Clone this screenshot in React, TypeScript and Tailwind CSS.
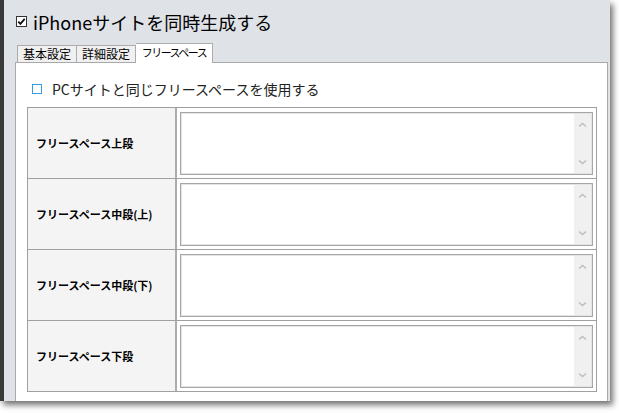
import React from 'react';

const font = { fontFamily: '"Noto Sans CJK JP", "Noto Sans", sans-serif' };

const rows = ['フリースペース上段', 'フリースペース中段(上)', 'フリースペース中段(下)', 'フリースペース下段'];

const Chevron = ({ down }: { down?: boolean }) => (
  <svg width="9" height="6" viewBox="0 0 9 6">
    <path
      d={down ? 'M1 1.5 L4.5 4.5 L8 1.5' : 'M1 4.5 L4.5 1.5 L8 4.5'}
      fill="none"
      stroke="#bdbdbd"
      strokeWidth="1.4"
    />
  </svg>
);

const FakeTextarea = () => (
  <div className="flex h-full border border-[#a6a6a6] bg-white shadow-[inset_0_0_0_1px_#e4e4e4]">
    <div className="flex-1" />
    <div className="my-[1px] mr-[1px] flex w-[17px] flex-col items-center justify-between bg-[#f0f0f0] py-[8px]">
      <Chevron />
      <Chevron down />
    </div>
  </div>
);

const App = () => {
  return (
    <div className="relative h-[413px] w-[619px] overflow-hidden bg-white" style={font}>
      <div className="flex h-[401px] w-[610px] shadow-[3px_4px_6px_rgba(0,0,0,0.55)]">
        <div className="w-[4px] bg-[#3a3a3a]" />
        <div className="flex flex-1 flex-col bg-[#dfe2e7] pl-[11px] pr-[2px]">
          {/* header */}
          <div className="flex h-[43px] items-center pl-[1px]">
            <svg width="11" height="11" viewBox="0 0 11 11">
              <rect x="0.5" y="0.5" width="10" height="10" fill="white" stroke="#333" />
              <path d="M2.3 5.6 L4.4 7.8 L8.7 2.9" fill="none" stroke="#111" strokeWidth="1.8" />
            </svg>
            <span className="ml-[6px] text-[18px] leading-none text-black">iPhoneサイトを同時生成する</span>
          </div>

          {/* tabs */}
          <div className="relative z-10 -mb-px flex h-[20px] items-end pl-[2px]">
            <div className="mb-px flex h-[17px] w-[60px] items-center justify-center border border-b-0 border-[#acacac] bg-[#f0f0f0] text-[12px] leading-none text-black">
              基本設定
            </div>
            <div className="mb-px flex h-[17px] w-[59px] items-center justify-center border border-b-0 border-l-0 border-[#acacac] bg-[#f0f0f0] text-[12px] leading-none text-black">
              詳細設定
            </div>
            <div className="flex h-[20px] w-[77px] items-center justify-center border border-b-0 border-l-0 border-[#acacac] bg-white pb-[2px] text-[11px] leading-none tracking-[-1.5px] text-black">
              フリースペース
            </div>
          </div>

          {/* panel */}
          <div className="flex flex-1 flex-col border border-b-0 border-[#a9a9a9] bg-white pl-[11px] pr-[10px] pt-[16px]">
            <div className="flex h-[20px] items-center pl-[5px]">
              <div className="h-[10px] w-[10px] border border-[#3a9be0] bg-white" />
              <span className="ml-[10px] text-[14px] leading-none text-[#222]">PCサイトと同じフリースペースを使用する</span>
            </div>

            <div className="mt-[8px] border border-b-0 border-[#a0a0a0]">
              {rows.map((label) => (
                <div key={label} className="flex h-[71px] border-b border-[#a0a0a0]">
                  <div className="flex w-[149px] items-center border-r-2 border-[#acacac] bg-[#f4f4f4] pl-[8px] text-[11px] font-bold leading-none text-black">
                    {label}
                  </div>
                  <div className="flex-1 pb-[3px] pl-[3px] pr-[3px] pt-[4px]">
                    <FakeTextarea />
                  </div>
                </div>
              ))}
            </div>
          </div>
        </div>
      </div>
    </div>
  );
};

export default App;
